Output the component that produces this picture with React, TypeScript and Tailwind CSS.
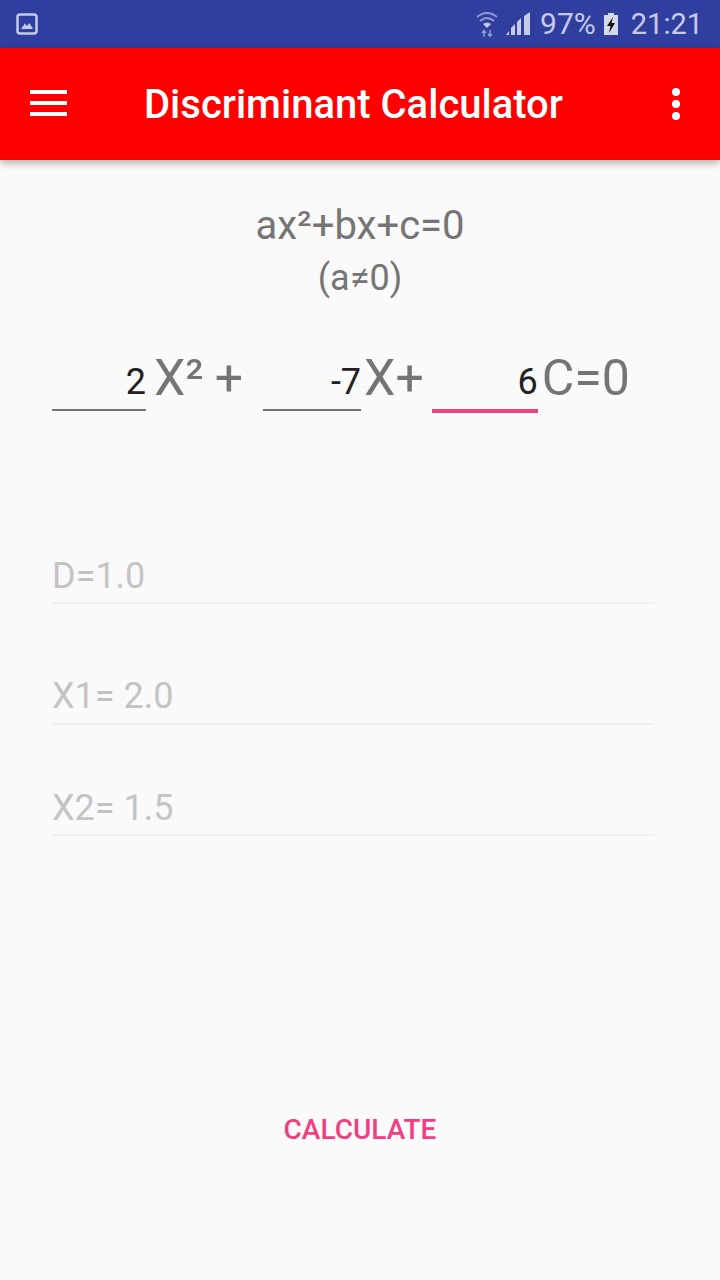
import React from "react";

function StatusBar() {
  return (
    <div className="flex h-12 items-center justify-between bg-[#303f9f] pl-4 pr-[17px] text-[#c5cbe9]">
      <svg width="22" height="24" viewBox="0 0 22 24">
        <rect x="1.5" y="2.5" width="19" height="19" rx="2.5" fill="none" stroke="#c5cbe9" strokeWidth="2.5" />
        <path d="M5 17 L9 11.5 L11 14 L13.5 11 L17 17 Z" fill="#c5cbe9" />
      </svg>
      <div className="flex items-center">
        <svg width="22" height="26" viewBox="0 0 22 26" className="mr-2">
          <path d="M1 6 Q11 -2 21 6" fill="none" stroke="#8f9ad0" strokeWidth="2" />
          <path d="M4 10 Q11 4 18 10" fill="none" stroke="#8f9ad0" strokeWidth="2" />
          <path d="M7 13 Q11 10 15 13 L11 17 Z" fill="#c5cbe9" />
          <path d="M8 26 V20 M6 22 L8 19.5 L10 22 M14 19 V25 M12 23 L14 25.5 L16 23" fill="none" stroke="#8f9ad0" strokeWidth="1.5" />
        </svg>
        <svg width="25" height="24" viewBox="0 0 25 24" className="mr-[9px]">
          <path d="M0 23 L3 19 V23 Z M5 23 V16 L9 12 V23 Z M11 23 V10 L15 6 V23 Z" fill="#c5cbe9" />
          <path d="M18 23 V4 L24 0 V23 Z" fill="#c5cbe9" />
        </svg>
        <span className="text-[30px] leading-none">97%</span>
        <svg width="16" height="24" viewBox="0 0 16 24" className="ml-[7px] mr-3">
          <path d="M5 1 h6 v2 h4 v20 h-14 v-20 h4 Z" fill="#d5d9ee" />
          <path d="M10 5 L4 14 h3.5 L6 21 L12 11 h-3.5 Z" fill="#111" />
        </svg>
        <span className="text-[29px] leading-none">21:21</span>
      </div>
    </div>
  );
}

function Toolbar() {
  return (
    <div className="relative flex h-28 items-center bg-[#ff0000] pl-[30px] pr-10 shadow-[0_3px_8px_rgba(0,0,0,0.3)]">
      <div className="mb-[2px] flex w-[37px] flex-col gap-[7px]">
        <div className="h-1 bg-white" />
        <div className="h-1 bg-white" />
        <div className="h-1 bg-white" />
      </div>
      <h1 className="ml-[77px] mt-[2px] flex-1 text-[40px] font-medium leading-none text-white">Discriminant Calculator</h1>
      <div className="flex flex-col gap-1">
        <div className="size-2 rounded-full bg-white" />
        <div className="size-2 rounded-full bg-white" />
        <div className="size-2 rounded-full bg-white" />
      </div>
    </div>
  );
}

function ResultRow({ text, className }: { text: string; className: string }) {
  return (
    <div className={`border-b-2 border-[#f0f0f0] text-[36px] leading-[42px] text-[#c4c4c4] ${className}`}>{text}</div>
  );
}

export default function App() {
  return (
    <div className="flex h-[1280px] w-[720px] flex-col overflow-hidden bg-[#fafafa] font-['Roboto',sans-serif]">
      <StatusBar />
      <Toolbar />

      <div className="mt-[42px] text-center text-[#757575]">
        <div className="text-[40px] leading-[47px]">ax²+bx+c=0</div>
        <div className="mt-2 text-[36px] leading-[42px]">(a≠0)</div>
      </div>

      <div className="mt-[49px] flex h-[66px] items-start pl-[52px] text-[#757575]">
        <div className="h-[63px] w-[94px] border-b-2 border-[#757575] pt-[13px] text-right text-[36px] leading-[42px] text-[#212121]">2</div>
        <span className="ml-2 text-[50px] leading-[61px]">X²</span>
        <span className="ml-[11px] text-[50px] leading-[61px]">+</span>
        <div className="ml-5 h-[63px] w-[98px] border-b-2 border-[#757575] pt-[13px] text-right text-[36px] leading-[42px] text-[#212121]">-7</div>
        <span className="ml-[3px] text-[50px] leading-[61px]">X+</span>
        <div className="ml-2 h-[65px] w-[106px] border-b-4 border-[#ef4081] pt-[13px] text-right text-[36px] leading-[42px] text-[#212121]">6</div>
        <span className="ml-1 text-[50px] leading-[61px]">C=0</span>
      </div>

      <div className="ml-[52px] mr-[66px] flex flex-col">
        <ResultRow text="D=1.0" className="mt-[141px] pb-[5px]" />
        <ResultRow text="X1= 2.0" className="mt-[71px] pb-[6px]" />
        <ResultRow text="X2= 1.5" className="mt-[62px] pb-[5px]" />
      </div>

      <div className="mt-[277px] text-center text-[28px] font-medium leading-[33px] text-[#ef4081]">CALCULATE</div>
    </div>
  );
}
